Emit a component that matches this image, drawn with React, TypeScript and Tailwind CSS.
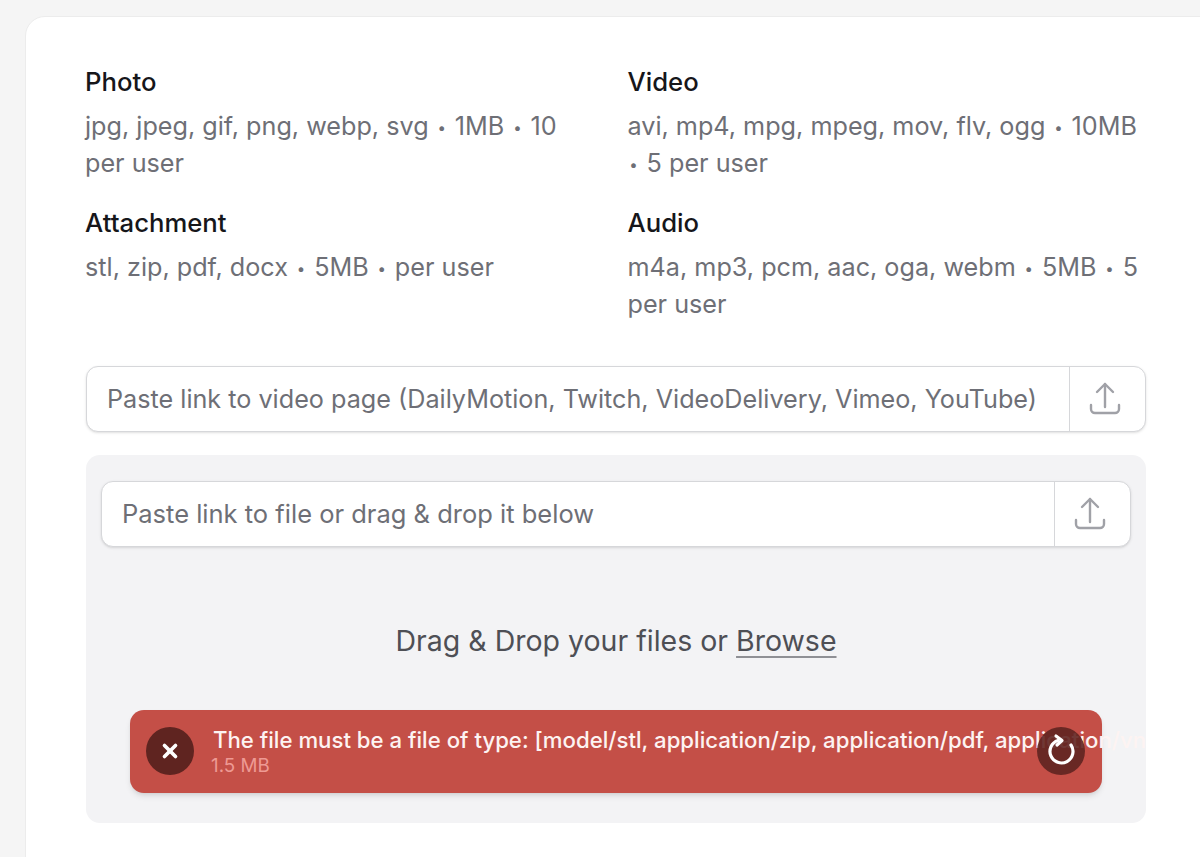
import { X } from "lucide-react";

const types = [
  { title: "Photo", parts: ["jpg, jpeg, gif, png, webp, svg", "1MB", "10 per user"] },
  { title: "Video", parts: ["avi, mp4, mpg, mpeg, mov, flv, ogg", "10MB", "5 per user"] },
  { title: "Attachment", parts: ["stl, zip, pdf, docx", "5MB", "per user"] },
  { title: "Audio", parts: ["m4a, mp3, pcm, aac, oga, webm", "5MB", "5 per user"] },
];

function Dot() {
  return <span className="inline-block w-[12px] text-center align-[2px] text-[15px] leading-none">•</span>;
}

function UploadIcon() {
  return (
    <svg width="36" height="36" viewBox="0 0 36 36" fill="none" stroke="#a0a1a7" strokeWidth="2.4" strokeLinecap="round" strokeLinejoin="round">
      <path d="M18 3V26" />
      <path d="M10 11L18 3L26 11" />
      <path d="M4 24V28a4 4 0 0 0 4 4H28a4 4 0 0 0 4-4V24" />
    </svg>
  );
}

function LinkInput({ placeholder, size }: { placeholder: string; size: string }) {
  return (
    <div className="flex h-[66px] rounded-xl border-[1.5px] border-[#d6d7da] bg-white shadow-sm">
      <div className={`flex flex-1 items-center overflow-hidden whitespace-nowrap pl-[20px] pt-[1px] text-[#6e6f76] ${size}`}>
        {placeholder}
      </div>
      <div className="flex w-[76px] items-center justify-center border-l-[1.5px] border-[#d6d7da] pr-[5px]">
        <UploadIcon />
      </div>
    </div>
  );
}

export default function App() {
  return (
    <div className="h-[857px] w-[1200px] overflow-hidden bg-[#f5f5f5] pl-[25px] pt-[16px] font-['Inter',sans-serif]">
      <div className="h-[900px] w-[1300px] rounded-tl-[20px] border border-[#ececec] bg-white pl-[60px] pt-[46px]">
        <div className="w-[1060px]">
          <div className="-ml-px grid grid-cols-2 gap-x-[24px] gap-y-[22px]">
            {types.map((t) => (
              <div key={t.title} className="pr-[4px]">
                <h3 className="text-[25.7px] font-medium leading-[37px] text-[#16161a]">{t.title}</h3>
                <p className="mt-[8px] text-[25.2px] leading-[37px] text-[#6e6f76]">
                  {t.parts[0]} <Dot /> {t.parts[1]} <Dot /> {t.parts[2]}
                </p>
              </div>
            ))}
          </div>

          <div className="mt-[43px]">
            <LinkInput
              size="text-[25.2px]"
              placeholder="Paste link to video page (DailyMotion, Twitch, VideoDelivery, Vimeo, YouTube)"
            />
          </div>

          <div className="mt-[23px] h-[368px] overflow-hidden rounded-[14px] bg-[#f3f3f5] px-[15px] pt-[26px]">
            <LinkInput size="text-[25.5px]" placeholder="Paste link to file or drag & drop it below" />

            <p className="mt-[74px] text-center text-[28.5px] leading-[40px] text-[#4e4f55]">
              Drag &amp; Drop your files or{" "}
              <span className="underline decoration-[#8f9095] decoration-2 underline-offset-[5px]">Browse</span>
            </p>

            <div className="relative ml-[29px] mt-[49px] h-[83px] w-[972px] rounded-[14px] bg-[#c44f47] shadow-md">
              <div className="absolute left-[83px] top-[15px] whitespace-nowrap text-[22.2px] font-medium leading-[30px] text-[#fdf3f2]">
                The file must be a file of type: [model/stl, application/zip, application/pdf, application/vnd.openxmlformats
              </div>
              <div className="absolute left-[81px] top-[44px] text-[18.8px] leading-[24px] text-[#ee9a94]">1.5 MB</div>
              <div className="absolute left-[16px] top-[17px] flex h-[48px] w-[48px] items-center justify-center rounded-full bg-[#5f2420] text-white">
                <X size={22} strokeWidth={4} />
              </div>
              <div className="absolute right-[17px] top-[17px] flex h-[48px] w-[48px] items-center justify-center rounded-full bg-[#5f2420]/90">
                <svg width="36" height="36" viewBox="0 0 36 36" fill="none" stroke="white" strokeWidth="3.2" strokeLinecap="round" strokeLinejoin="round">
                  <path d="M15 7.5A11.5 11.5 0 1 0 28 12" />
                  <path d="M13 3L19 7.5L14 12" />
                </svg>
              </div>
            </div>
          </div>
        </div>
      </div>
    </div>
  );
}
